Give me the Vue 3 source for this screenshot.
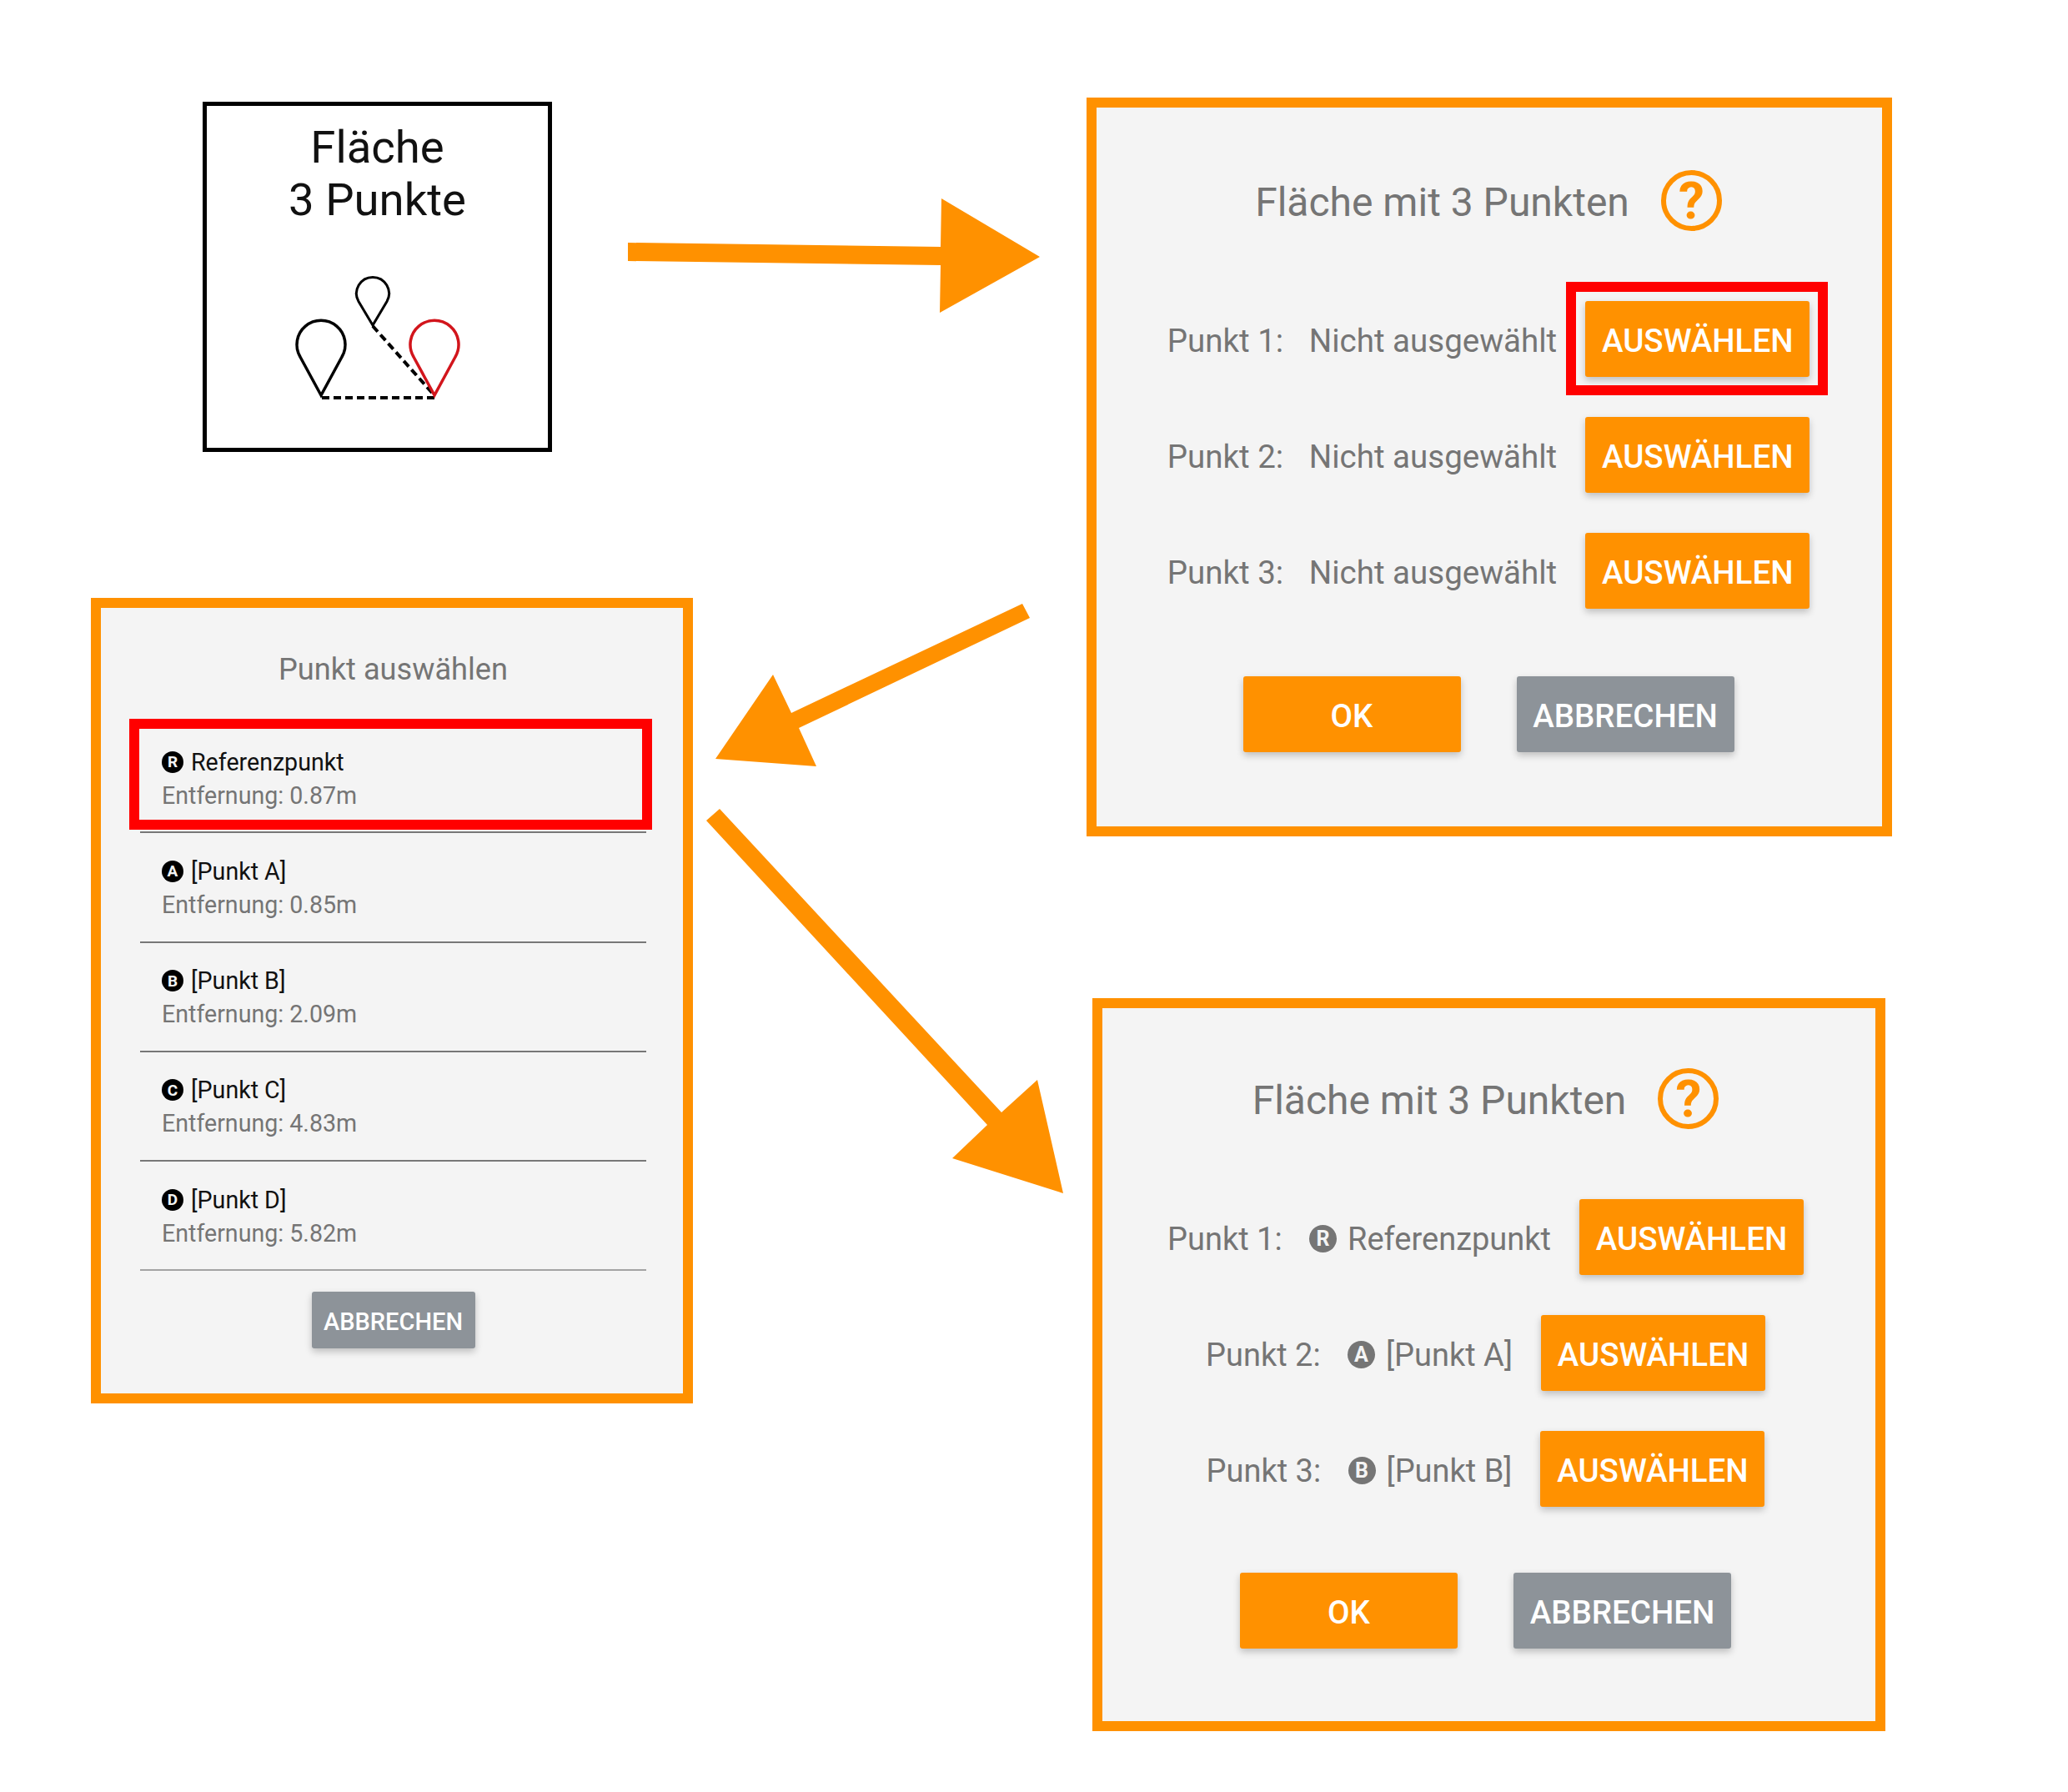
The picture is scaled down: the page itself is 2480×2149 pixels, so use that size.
<template>
  <div class="page">
    <div class="col-left">
      <div class="tile">
        <div class="tile-title">Fläche<br>3 Punkte</div>
        <svg class="tile-pins" viewBox="342 320 220 170" width="220" height="170">
          <path d="M446 389 L518 470" class="dash" />
          <path d="M385 475 H520" class="dash" />
          <path d="M384 472 L359 426 A29 29 0 1 1 409 426 Z" class="pin" />
          <path d="M446 388 L429 359.5 A19.5 19.5 0 1 1 463 359.5 Z" class="pin pin--small" />
          <path d="M520 472 L495 426 A29 29 0 1 1 545 426 Z" class="pin pin--red" />
        </svg>
      </div>

      <div class="picker">
        <div class="picker-title">Punkt auswählen</div>
        <div class="picker-list">
          <div
            v-for="(item, index) in points"
            :key="item.letter"
            class="picker-item"
            :class="{ 'picker-item--marked': index === 0, 'picker-item--last': index === points.length - 1 }"
          >
            <div class="picker-name">
              <span class="badge badge--small">{{ item.letter }}</span>{{ item.name }}
            </div>
            <div class="picker-dist">Entfernung: {{ item.dist }}</div>
          </div>
        </div>
        <button class="btn btn--grey btn--small">ABBRECHEN</button>
      </div>
    </div>

    <div class="col-right">
      <div class="dialog dialog--top">
        <div class="dialog-head">
          <span class="dialog-title">Fläche mit 3 Punkten</span>
          <span class="help">?</span>
        </div>
        <div v-for="(row, index) in emptyRows" :key="row" class="row">
          <span class="row-label">{{ row }}</span>
          <span class="row-value">Nicht ausgewählt</span>
          <button class="btn btn--pick" :class="{ 'btn--marked': index === 0 }">AUSWÄHLEN</button>
        </div>
        <div class="actions">
          <button class="btn btn--ok">OK</button>
          <button class="btn btn--grey">ABBRECHEN</button>
        </div>
      </div>

      <div class="dialog dialog--bottom">
        <div class="dialog-head">
          <span class="dialog-title">Fläche mit 3 Punkten</span>
          <span class="help">?</span>
        </div>
        <div v-for="row in filledRows" :key="row.label" class="row">
          <span class="row-label">{{ row.label }}</span>
          <span class="row-value">
            <span class="badge">{{ row.letter }}</span>{{ row.name }}
          </span>
          <button class="btn btn--pick">AUSWÄHLEN</button>
        </div>
        <div class="actions">
          <button class="btn btn--ok">OK</button>
          <button class="btn btn--grey">ABBRECHEN</button>
        </div>
      </div>
    </div>

    <svg class="arrows" viewBox="0 0 2480 2149" width="2480" height="2149">
      <polygon points="753,291 1128,296 1129,238 1247,308 1127,375 1128,318 753,313" />
      <polygon points="1226,724 1235,741 958,873 979,919 858,910 927,809 949,855" />
      <polygon points="863,970 1201,1334 1244,1295 1275,1431 1142,1389 1184,1349 847,984" />
    </svg>
  </div>
</template>

<script setup>
const points = [
  { letter: 'R', name: 'Referenzpunkt', dist: '0.87m' },
  { letter: 'A', name: '[Punkt A]', dist: '0.85m' },
  { letter: 'B', name: '[Punkt B]', dist: '2.09m' },
  { letter: 'C', name: '[Punkt C]', dist: '4.83m' },
  { letter: 'D', name: '[Punkt D]', dist: '5.82m' }
]

const emptyRows = ['Punkt 1:', 'Punkt 2:', 'Punkt 3:']

const filledRows = [
  { label: 'Punkt 1:', letter: 'R', name: 'Referenzpunkt' },
  { label: 'Punkt 2:', letter: 'A', name: '[Punkt A]' },
  { label: 'Punkt 3:', letter: 'B', name: '[Punkt B]' }
]
</script>

<style>
body {
  background: #fff;
}
</style>

<style scoped>
.page {
  position: relative;
  display: flex;
  width: 2480px;
  height: 2149px;
  overflow: hidden;
  background: #fff;
  font-family: Roboto, sans-serif;
}

.col-left {
  width: 722px;
  margin-left: 109px;
  padding-top: 122px;
}

.col-right {
  margin-left: 472px;
  padding-top: 117px;
}

/* tile */
.tile {
  box-sizing: border-box;
  width: 419px;
  height: 420px;
  margin-left: 134px;
  border: 5px solid #000;
  padding-top: 18px;
  text-align: center;
}

.tile-title {
  font-size: 54.5px;
  line-height: 63px;
  color: #111;
}

.tile-pins {
  display: block;
  margin: 51px auto 0;
}

.pin {
  fill: none;
  stroke: #000;
  stroke-width: 3.5;
  stroke-linejoin: miter;
}

.pin--small {
  stroke-width: 3;
}

.pin--red {
  stroke: #d2151c;
}

.dash {
  fill: none;
  stroke: #000;
  stroke-width: 4;
  stroke-dasharray: 9 5;
}

/* list dialog */
.picker {
  box-sizing: border-box;
  width: 722px;
  height: 966px;
  margin-top: 175px;
  border: 12px solid #ff9100;
  padding: 53px 44px 0 47px;
  background: #f4f4f4;
  text-align: center;
}

.picker-title {
  font-size: 36.2px;
  line-height: 42px;
  color: #757575;
}

.picker-list {
  margin-top: 44px;
  text-align: left;
}

.picker-item {
  position: relative;
  padding: 25.5px 26px 23.75px;
  border-bottom: 2px solid #777;
}

.picker-item--last {
  border-bottom-color: #a3a3a3;
}

.picker-item--marked::after {
  content: '';
  position: absolute;
  inset: -6px -7px 2px -13px;
  border: 12px solid #ff0000;
}

.picker-name {
  display: flex;
  align-items: center;
  height: 40px;
  font-size: 28.6px;
  color: #111;
}

.picker-dist {
  height: 40px;
  font-size: 28.6px;
  line-height: 40px;
  color: #757575;
}

.badge {
  display: inline-flex;
  flex: none;
  align-items: center;
  justify-content: center;
  width: 33px;
  height: 33px;
  margin-right: 13px;
  border-radius: 50%;
  background: #757575;
  color: #f4f4f4;
  font-size: 25px;
  font-weight: 700;
}

.badge--small {
  width: 26px;
  height: 26px;
  margin-right: 9px;
  background: #000;
  font-size: 19px;
}

/* dialogs */
.dialog {
  box-sizing: border-box;
  border: 12px solid #ff9100;
  background: #f4f4f4;
}

.dialog--top {
  width: 966px;
  height: 886px;
  padding: 75px 2px 0 0;
}

.dialog--bottom {
  width: 951px;
  height: 879px;
  margin-top: 194px;
  margin-left: 7px;
  padding: 72px 8px 0 0;
}

.dialog--bottom .row {
  font-size: 38px;
}

.dialog--bottom .actions {
  margin-top: 79px;
}

.dialog-head {
  display: flex;
  align-items: center;
  justify-content: center;
  gap: 38px;
  margin-bottom: 84px;
}

.dialog-title {
  margin-top: 5px;
  font-size: 48px;
  line-height: 54px;
  color: #757575;
}

.help {
  display: flex;
  box-sizing: border-box;
  align-items: center;
  justify-content: center;
  width: 73px;
  height: 73px;
  border: 6px solid #ff9100;
  border-radius: 50%;
  color: #ff9100;
  font-size: 62px;
  font-weight: 700;
  line-height: 1;
}

.row {
  display: flex;
  align-items: center;
  justify-content: center;
  margin-bottom: 48px;
  font-size: 38.5px;
  color: #757575;
}

.row-label {
  width: 170px;
  padding-top: 4px;
}

.row-value {
  display: flex;
  align-items: center;
  margin-right: 34px;
  padding-top: 4px;
}

.actions {
  display: flex;
  justify-content: center;
  gap: 67px;
  margin-top: 81px;
}

.btn {
  box-sizing: border-box;
  height: 91px;
  border: 0;
  border-radius: 3px;
  padding: 4px 0 0;
  color: #fff;
  font-family: Roboto, sans-serif;
  font-size: 38.5px;
  font-weight: 500;
  box-shadow: 0 4px 8px rgba(0, 0, 0, 0.22);
}

.btn--pick {
  position: relative;
  width: 269px;
  background: #ff9100;
}

.btn--marked::after {
  content: '';
  position: absolute;
  inset: -23px -22px -22px -23px;
  border: 12px solid #ff0000;
}

.btn--ok {
  width: 261px;
  background: #ff9100;
}

.btn--grey {
  width: 261px;
  background: #8d9399;
}

.btn--small {
  display: block;
  width: 196px;
  height: 68px;
  margin: 25px auto 0;
  padding-top: 4px;
  font-size: 29px;
}

.arrows {
  position: absolute;
  top: 0;
  left: 0;
  pointer-events: none;
  fill: #ff9100;
}
</style>
